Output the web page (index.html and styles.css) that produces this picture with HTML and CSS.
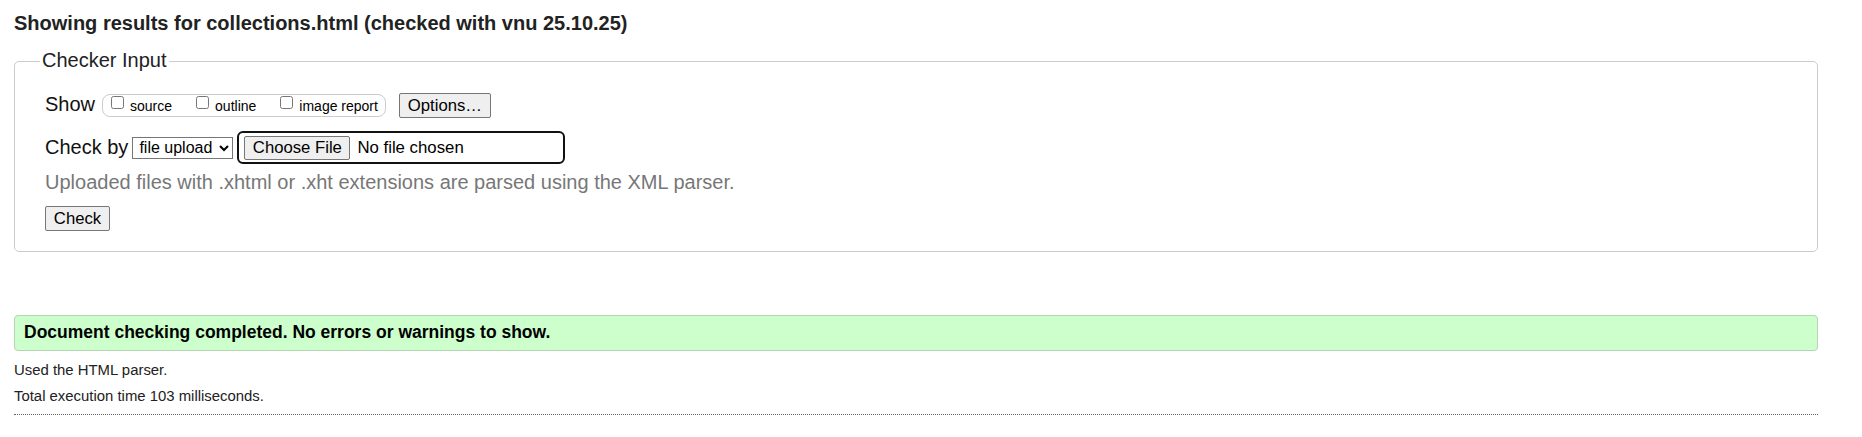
FILE: index.html
```html
<!DOCTYPE html>
<html lang="en">
<head>
<meta charset="utf-8">
<title>Showing results for collections.html - Nu Html Checker</title>
<link rel="stylesheet" href="styles.css">
</head>
<body>
<h1 class="title">Showing results for collections.html (checked with vnu 25.10.25)</h1>
<form class="checker">
  <fieldset class="checker-input">
    <legend class="checker-legend">Checker Input</legend>
    <div class="row show-row">
      <span class="row-label show-label">Show</span>
      <span class="show-options">
        <label class="opt"><input type="checkbox" class="cb"><span class="opt-text">source</span></label>
        <label class="opt"><input type="checkbox" class="cb"><span class="opt-text">outline</span></label>
        <label class="opt"><input type="checkbox" class="cb"><span class="opt-text">image report</span></label>
      </span>
      <button type="button" class="btn btn-options">Options…</button>
    </div>
    <div class="row checkby-row">
      <span class="row-label">Check by</span>
      <select class="docselect"><option>file upload</option></select>
      <span class="file-input"><span class="btn btn-file">Choose File</span><span class="file-name">No file chosen</span></span>
    </div>
    <p class="hint">Uploaded files with .xhtml or .xht extensions are parsed using the XML parser.</p>
    <div class="row submit-row"><button type="button" class="btn btn-check">Check</button></div>
  </fieldset>
</form>
<p class="success">Document checking completed. No errors or warnings to show.</p>
<div class="details">
  <p class="detail">Used the HTML parser.</p>
  <p class="detail">Total execution time 103 milliseconds.</p>
</div>
<hr class="end">
</body>
</html>
```

FILE: styles.css
```css
* { box-sizing: border-box; }
html { background: #fff; }
body {
  margin: 0;
  padding: 0 44px 0 14px;
  font-family: "Liberation Sans", Arial, sans-serif;
  color: #000;
}
.title {
  margin: 12px 0 0;
  font-size: 20px;
  line-height: 23px;
  font-weight: bold;
  color: #222;
}
.checker { margin: 15px 0 0; }
.checker-input {
  margin: 0;
  min-width: 0;
  padding: 20px 20px 20px 30px;
  border: 1px solid #ccc;
  border-radius: 5px;
}
.checker-legend {
  margin-left: -5px;
  padding: 0 2px 2px;
  font-size: 20px;
  line-height: 20px;
  color: #222;
}
.row { display: flex; align-items: center; }
.row-label { font-size: 20px; line-height: 23px; color: #111; }
.show-label { margin-bottom: 2px; }
.show-row { height: 26px; }
.show-options {
  display: inline-flex;
  align-items: flex-start;
  height: 23px;
  margin-left: 7px;
  padding: 0 7px 0 4px;
  border: 1px solid #ccc;
  border-radius: 8px;
  font-size: 14px;
  line-height: 16px;
}
.opt { display: inline-flex; align-items: flex-start; white-space: nowrap; }
.opt + .opt { margin-left: 20px; }
.cb { margin: 1px 6px 0 4px; width: 13px; height: 13px; }
.opt-text { margin-top: 3px; }
.btn {
  display: inline-flex;
  align-items: center;
  justify-content: center;
  font-family: "Liberation Sans", Arial, sans-serif;
  font-size: 16.7px;
  line-height: 19px;
  color: #000;
  background: #efefef;
  border: 1px solid #767676;
  border-radius: 2px;
  padding: 0;
}
.btn-options { margin-left: 13px; width: 92px; height: 25px; }
.checkby-row { margin-top: 13px; height: 33px; }
.docselect {
  margin-left: 4px;
  width: 101px;
  height: 22px;
  font-family: "Liberation Sans", Arial, sans-serif;
  font-size: 16px;
  color: #000;
  background: #fff;
  border: 1px solid #767676;
  border-radius: 0;
  padding: 0 0 0 2px;
}
.file-input {
  display: inline-flex;
  align-items: center;
  margin-left: 4px;
  width: 328px;
  height: 33px;
  border: 2px solid #111;
  border-radius: 6px;
  padding: 0 0 0 5px;
  font-size: 16.8px;
}
.btn-file { width: 106px; height: 24px; }
.file-name { margin-left: 7px; color: #000; }
.hint {
  margin: 7px 0 0;
  font-size: 20px;
  line-height: 23px;
  color: #777;
}
.submit-row { margin-top: 12px; }
.btn-check { width: 65px; height: 25px; }
.success {
  margin: 63px 0 0;
  padding: 6px 9px 8px;
  border: 1px solid #b4d4b4;
  border-radius: 4px;
  background: #ccffcc;
  font-size: 17.5px;
  line-height: 20px;
  font-weight: bold;
  color: #000;
}
.details { margin-top: 11px; }
.detail {
  margin: 0 0 9px;
  font-size: 14.9px;
  line-height: 17px;
  color: #222;
}
.end {
  margin: 1px 0 0;
  height: 0;
  border: 0;
  border-top: 1px dotted #666;
}
```
